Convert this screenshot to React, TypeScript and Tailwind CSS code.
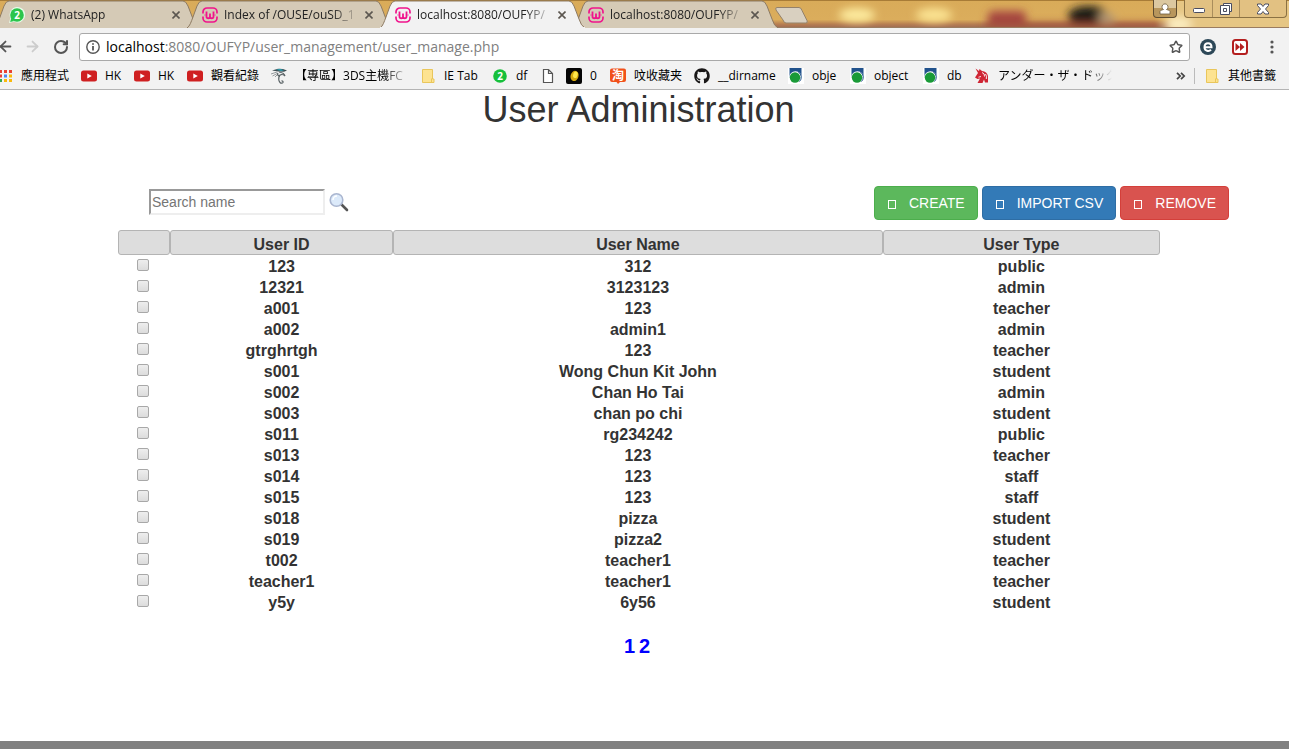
import { ReactNode } from "react";
import { ArrowLeft, ArrowRight, RotateCw, Star } from "lucide-react";
import { FaGithub } from "react-icons/fa";

const chromeFont = "font-['Open_Sans','Noto_Sans_CJK_TC',sans-serif]";

function WampIcon() {
  return (
    <svg viewBox="0 0 16 16" className="size-4 shrink-0" fill="none" stroke="#f0148c">
      <path d="M1 6.500V5a4 4 0 0 1 4-4h6a4 4 0 0 1 4 4v1.500M1 9.500V11a4 4 0 0 0 4 4h6a4 4 0 0 0 4-4V9.500" strokeWidth="1.700" />
      <path d="M4.500 4.500v5a1.750 1.750 0 0 0 3.500 0V6.500v3a1.750 1.750 0 0 0 3.500 0v-5" strokeWidth="1.800" />
      <path d="M2.500 8h1M12.500 8h1" strokeWidth="1" />
    </svg>
  );
}

function ChatBadge({ tail = true }: { tail?: boolean }) {
  return (
    <svg viewBox="0 0 16 16" className="size-4 shrink-0">
      {tail && <path d="M0 16l1.300-5A7.800 7.800 0 1 1 5 14.800z" fill="#e6fbe9" />}
      <circle cx="8" cy="8" r="6.800" fill={tail ? "#2bc54c" : "#16c03b"} />
      {tail && <path d="M1.200 15l1-4 3 3z" fill="#2bc54c" />}
      <text x="8" y="11.500" textAnchor="middle" fontSize="10" fontWeight="700" fill="#fff" fontFamily="Open Sans">2</text>
    </svg>
  );
}

function YouTubeIcon() {
  return (
    <svg viewBox="0 0 16 16" className="size-4 shrink-0">
      <rect y="2.500" width="16" height="11" rx="2.500" fill="#cf2021" />
      <path d="M6.300 5.500v5L10.800 8z" fill="#fff" />
    </svg>
  );
}

function DragonIcon() {
  return (
    <svg viewBox="0 0 16 16" className="size-4 shrink-0" fill="none">
      <path d="M1 2.500L7 .8l5 .2 4 1.500-3 1.200L7 3.500z" fill="#3f4f54" />
      <path d="M5 1.800L9 .8l4 1.500-3 .8z" fill="#2d9cad" />
      <path d="M0 6l6-2M1.500 8L7 5M4 9l3-3" stroke="#8b9193" strokeWidth="0.900" />
      <path d="M8 4c3 .5 5.500 1.500 6 4M7 5c-1 1.500 0 3 2 3.300M14 8c-2.500-2.500-5.500-1.500-6 .5-.6 2.500-.5 4.500 1 6 1 1 2.500.8 3 0 .3-1-.5-1.800-1.500-1.500" stroke="#5a6366" strokeWidth="1.200" />
    </svg>
  );
}

function FolderIcon() {
  return (
    <svg viewBox="0 0 16 16" className="size-4 shrink-0">
      <path d="M2.500 1.500h10v9.500h1.500v3.500H2.500z" fill="#fde391" stroke="#e9c65b" />
      <path d="M11.500 14v-3.500" stroke="#e9c65b" />
    </svg>
  );
}

function PageIcon() {
  return (
    <svg viewBox="0 0 16 16" className="size-4 shrink-0" fill="#fff" stroke="#555" strokeWidth="1.200">
      <path d="M3.500 1.500h5l4 4v9h-9zM8.500 1.500v4h4" />
    </svg>
  );
}

function CoinIcon() {
  return (
    <svg viewBox="0 0 16 16" className="size-4 shrink-0">
      <rect width="16" height="16" rx="2" fill="#050505" />
      <ellipse cx="8.500" cy="7.800" rx="4" ry="5.200" fill="#d5a90f" transform="rotate(15 8 8)" />
      <ellipse cx="9" cy="6.500" rx="2.200" ry="3.300" fill="#ffe84a" transform="rotate(15 8 8)" />
    </svg>
  );
}

function TaobaoIcon() {
  return (
    <svg viewBox="0 0 16 16" className="size-4 shrink-0">
      <path d="M2 .5h12q2 0 2 2V12q0 2-2 2h-4l-2 2-1.500-2H2q-2 0-2-2V2.500Q0 .5 2 .5" fill="#f1511b" />
      <text x="8" y="12" textAnchor="middle" fontSize="12" fontWeight="700" fill="#fff" fontFamily="Noto Sans CJK TC">淘</text>
    </svg>
  );
}

function SchoolIcon() {
  return (
    <svg viewBox="0 0 16 16" className="size-4 shrink-0">
      <path d="M0 0h16v16H0z" fill="#fff" />
      <path d="M1.500 0h12v10H1.500z" fill="#21528c" />
      <circle cx="7.500" cy="9.500" r="6.300" fill="#fff" />
      <path d="M10.500 4.200a6 6 0 0 1 1 9.300" stroke="#21528c" fill="none" />
      <circle cx="7" cy="9.500" r="5.200" fill="#1a9a38" />
    </svg>
  );
}

function UnicornIcon() {
  return (
    <svg viewBox="0 0 16 16" className="size-4 shrink-0">
      <path d="M1.500.5L5 3l.5-2L8 3q5 .5 6 5v6.500h-3l-1-3-1.500 3.500H3.500L6 10.500l-2.500.5L1 9.500 4 5z" fill="#cf2534" />
      <path d="M4.500 9.200L7 8.500M8 4.500q3 1 2.500 4M11.500 6q1.500 2 .8 5" stroke="#fff" strokeWidth="0.900" fill="none" />
    </svg>
  );
}

function CloseMark() {
  return (
    <svg viewBox="0 0 8 8" className="size-2" stroke="currentColor" strokeWidth="1.600">
      <path d="M.5.5l7 7M7.500.5l-7 7" />
    </svg>
  );
}

const tabs = [
  { title: "(2) WhatsApp", icon: <ChatBadge />, active: false },
  { title: "Index of /OUSE/ouSD_1", icon: <WampIcon />, active: false },
  { title: "localhost:8080/OUFYP/", icon: <WampIcon />, active: true },
  { title: "localhost:8080/OUFYP/", icon: <WampIcon />, active: false },
];

function TabStrip() {
  return (
    <div className="relative flex h-7 overflow-hidden bg-[#d8aa58]">
      <svg className="absolute inset-0 h-full w-full" viewBox="0 0 1289 28" preserveAspectRatio="none">
        <defs>
          <filter id="haze" x="-50%" y="-50%" width="200%" height="200%"><feGaussianBlur stdDeviation="4" /></filter>
          <linearGradient id="gold" x2="0" y2="1">
            <stop offset="0" stopColor="#d9ab59" />
            <stop offset="0.700" stopColor="#dbad5c" />
            <stop offset="0.860" stopColor="#b87f52" />
            <stop offset="1" stopColor="#9c6a55" />
          </linearGradient>
        </defs>
        <rect width="1289" height="28" fill="url(#gold)" />
        <g filter="url(#haze)">
          <rect x="1168" y="-10" width="140" height="50" fill="#e6c684" />
          <ellipse cx="857" cy="15" rx="18" ry="7" fill="#fdeb9e" />
          <ellipse cx="934" cy="15" rx="18" ry="7" fill="#fbe392" />
          <rect x="988" y="11" width="38" height="14" rx="5" fill="#a5453f" />
          <ellipse cx="1088" cy="16" rx="20" ry="10" fill="#1f1a12" />
          <ellipse cx="1106" cy="18" rx="9" ry="5" fill="#b59a75" />
          <rect x="985" y="23" width="175" height="5" fill="#9a4736" />
          <ellipse cx="1178" cy="24" rx="14" ry="7" fill="#fcedc0" />
        </g>
        <path d="M0 .5h1289" stroke="#a87c37" />
        <path d="M0 27.500h1289" stroke="#9a7c60" />
      </svg>
      <div className="relative -ml-[6px] flex">
        {tabs.map((tab, i) => (
          <div key={i} className={`relative -mr-3 h-7 w-[205px] ${tab.active ? "z-10" : ""}`}>
            <svg className="absolute inset-0 h-full w-full" viewBox="0 0 205 28">
              <path
                d="M0 28C3 26 4 22 6 17L10 6Q12 1 15 1H189Q192 1 194 6L199 19Q201 26 205 28"
                fill={tab.active ? "#f2f2f2" : "#d5cab6"}
                stroke="#8d7a62"
              />
              {tab.active && <path d="M0 28h205" stroke="#f2f2f2" strokeWidth="2" />}
            </svg>
            <div className={`relative flex h-7 items-center pt-0.5 pr-[15px] pl-[15px] text-[12px] text-[#222] ${chromeFont}`}>
              {tab.icon}
              <span className="ml-[6px] whitespace-nowrap [mask-image:linear-gradient(to_right,black_108px,transparent_136px)]">
                {tab.title}
              </span>
              <button aria-label={`Close ${tab.title}`} className="ml-auto flex size-4 shrink-0 items-center justify-center text-[#5c5750]">
                <CloseMark />
              </button>
            </div>
          </div>
        ))}
        <button aria-label="New tab" className="relative ml-2 h-7 w-9">
          <svg viewBox="0 0 36 28" className="h-7 w-9">
            <path d="M3 7.500h22q2 0 3 3l5 10q1 2.500-1 2.500H12q-2 0-3-3L2 10q-1-2.500 1-2.500" fill="#d9d0c0" stroke="#94816a" />
          </svg>
        </button>
      </div>
      <div className="relative ml-auto flex items-start text-white">
        <button aria-label="Profile" className="mr-[7px] flex h-[18px] w-6 items-center justify-center rounded-b border border-t-0 border-[#5e4c31] bg-linear-to-b from-[#dcc8a0] from-50% to-[#b8965c] to-50%">
          <svg viewBox="0 0 12 12" className="size-3" fill="#fff" stroke="#6c5a3d" strokeWidth="0.800">
            <path d="M1 11V8.500Q1 7 4.500 6.500a3 3 0 1 1 3 0Q11 7 11 8.500V11z" />
          </svg>
        </button>
        <div className="mr-[2px] flex h-[18px] divide-x divide-[#a98d5c] rounded-b border border-t-0 border-[#8b7143] bg-[#e2c182]">
          <button aria-label="Minimize" className="flex w-7 items-center justify-center">
            <svg viewBox="0 0 12 12" className="size-3"><rect x=".5" y="5.500" width="11" height="4" rx="1" fill="#fff" stroke="#494c60" /></svg>
          </button>
          <button aria-label="Restore" className="flex w-[27px] items-center justify-center">
            <svg viewBox="0 0 12 12" className="size-3" fill="#fff" stroke="#494c60"><path d="M3.500.5h8v8h-8z" /><path d="M.5 2.500h9v9h-9z" /><path d="M3.500 5.500h3v3h-3z" /></svg>
          </button>
          <button aria-label="Close window" className="flex w-[46px] items-center justify-center">
            <svg viewBox="0 0 12 12" className="size-3"><path d="M.5 1h3.500L6 3.500 8 1h3.500v1.500L8.500 6l3 3.500V11H8L6 8.500 4 11H.5V9.500L3.500 6l-3-3.500z" fill="#fff" stroke="#494c60" /></svg>
          </button>
        </div>
      </div>
    </div>
  );
}

function Toolbar() {
  return (
    <div className="flex h-[34px] items-center bg-[#f2f2f2] pt-[3px]">
      <button aria-label="Back" className="-ml-[3px] text-[#555]"><ArrowLeft className="size-[17px]" strokeWidth={2.5} /></button>
      <button aria-label="Forward" className="ml-[10px] text-[#ccc]"><ArrowRight className="size-[17px]" strokeWidth={2.5} /></button>
      <button aria-label="Reload" className="ml-3 text-[#555]"><RotateCw className="size-4" strokeWidth={3} /></button>
      <div className="ml-[10px] flex h-7 flex-1 items-center rounded-[3px] border border-[#a9a9a9] bg-white pl-[6px]">
        <svg viewBox="0 0 14 14" className="size-[14px]" fill="none" stroke="#555" strokeWidth="1.400">
          <circle cx="7" cy="7" r="6.200" /><path d="M7 6v4.500M7 3.300v1.500" strokeWidth="1.800" />
        </svg>
        <div className={`ml-[6px] flex-1 text-[14px] text-[#808080] ${chromeFont}`}>
          <span className="text-black">localhost</span>:8080/OUFYP/user_management/user_manage.php
        </div>
        <button aria-label="Bookmark this page" className="mr-[6px] text-[#555]"><Star className="size-[14px]" strokeWidth={2.5} /></button>
      </div>
      <button aria-label="IE Tab" className="ml-[10px]">
        <svg viewBox="0 0 16 16" className="size-4">
          <circle cx="8" cy="8" r="8" fill="#2d4858" />
          <path d="M4.500 8.300h7C11.500 3 4.500 3 4.500 8.300c0 4 4.500 4.500 6.500 2.500" fill="none" stroke="#fff" strokeWidth="2" />
        </svg>
      </button>
      <button aria-label="Fast forward" className="ml-4">
        <svg viewBox="0 0 16 16" className="size-4">
          <rect x="1" y="1" width="14" height="14" rx="2.500" fill="#fff" stroke="#b41f1f" strokeWidth="2" />
          <path d="M3.500 4l4.500 4-4.500 4zM8 4l4.500 4L8 12z" fill="#b41f1f" />
        </svg>
      </button>
      <button aria-label="Menu" className="mr-[9px] ml-4">
        <svg viewBox="0 0 16 16" className="size-4" fill="#555"><circle cx="8" cy="3" r="1.600" /><circle cx="8" cy="8" r="1.600" /><circle cx="8" cy="13" r="1.600" /></svg>
      </button>
    </div>
  );
}

const bookmarks: { icon: ReactNode; label: string; width: string; fade?: boolean }[] = [
  { icon: <YouTubeIcon />, label: "HK", width: "w-[17px]" },
  { icon: <YouTubeIcon />, label: "HK", width: "w-[17px]" },
  { icon: <YouTubeIcon />, label: "觀看紀錄", width: "w-[48px]" },
  { icon: <DragonIcon />, label: "【專區】3DS主機FC", width: "w-[113px]", fade: true },
  { icon: <FolderIcon />, label: "IE Tab", width: "w-[36px]" },
  { icon: <ChatBadge tail={false} />, label: "df", width: "w-[12px]" },
  { icon: <PageIcon />, label: "", width: "w-0" },
  { icon: <CoinIcon />, label: "0", width: "w-[8px]" },
  { icon: <TaobaoIcon />, label: "呅收藏夹", width: "w-[48px]" },
  { icon: <FaGithub className="size-4 shrink-0 text-[#191717]" />, label: "__dirname", width: "w-[58px]" },
  { icon: <SchoolIcon />, label: "obje", width: "w-[26px]" },
  { icon: <SchoolIcon />, label: "object", width: "w-[37px]" },
  { icon: <SchoolIcon />, label: "db", width: "w-[15px]" },
  { icon: <UnicornIcon />, label: "アンダー・ザ・ドック", width: "w-[120px]", fade: true },
];

function BookmarksBar() {
  return (
    <nav className={`flex h-7 items-center border-b border-[#b4b4b4] bg-[#f2f2f2] text-[12px] whitespace-nowrap text-black ${chromeFont}`}>
      <a href="#apps" className="flex items-center">
        <svg viewBox="0 0 12 12" className="mr-[9px] size-3">
          <path d="M0 0h2v3H0zM9 0h3v3H9zM0 4.500h2v3H0z" fill="#e94234" />
          <path d="M4 0h3v3H4z" fill="#e94234" />
          <path d="M4 4.500h3v3H4z" fill="#4a88f0" />
          <path d="M9 4.500h3v3H9zM4 9h3v3H4zM9 9h3v3H9z" fill="#f9b90b" />
          <path d="M0 9h2v3H0z" fill="#34a853" />
        </svg>
        應用程式
      </a>
      {bookmarks.map((b, i) => (
        <a key={i} href="#bookmark" aria-label={b.label || "Page"} className={`ml-3 flex items-center ${b.label ? "gap-2" : "mr-[-2px]"}`}>
          {b.icon}
          <span className={`${b.width} ${b.fade ? "[mask-image:linear-gradient(to_right,black_88px,transparent_114px)]" : ""}`}>{b.label}</span>
        </a>
      ))}
      <button aria-label="More bookmarks" className="ml-auto text-[#444]">
        <svg viewBox="0 0 10 8" className="h-2 w-[10px]" fill="none" stroke="currentColor" strokeWidth="1.700">
          <path d="M1 .8L4.200 4 1 7.200M5 .8L8.200 4 5 7.200" />
        </svg>
      </button>
      <span className="mr-[9px] ml-2 h-4 w-px bg-[#bbb]" />
      <a href="#other" className="mr-[13px] flex items-center gap-2"><FolderIcon />其他書籤</a>
    </nav>
  );
}

const users = [
  ["123", "312", "public"],
  ["12321", "3123123", "admin"],
  ["a001", "123", "teacher"],
  ["a002", "admin1", "admin"],
  ["gtrghrtgh", "123", "teacher"],
  ["s001", "Wong Chun Kit John", "student"],
  ["s002", "Chan Ho Tai", "admin"],
  ["s003", "chan po chi", "student"],
  ["s011", "rg234242", "public"],
  ["s013", "123", "teacher"],
  ["s014", "123", "staff"],
  ["s015", "123", "staff"],
  ["s018", "pizza", "student"],
  ["s019", "pizza2", "student"],
  ["t002", "teacher1", "teacher"],
  ["teacher1", "teacher1", "teacher"],
  ["y5y", "6y56", "student"],
];

const actions = [
  { label: "CREATE", style: "bg-[#5cb85c] border-[#4cae4c]" },
  { label: "IMPORT CSV", style: "bg-[#337ab7] border-[#2e6da4]" },
  { label: "REMOVE", style: "bg-[#d9534f] border-[#d43f3a]" },
];

const headCell = "h-[25px] rounded-[3px] border border-[#b4b4b4] bg-[#ddd] p-0 pt-1";
const bodyCell = "p-0 pt-0.5";

export default function App() {
  return (
    <div className="flex min-h-screen flex-col bg-white">
      <header>
        <TabStrip />
        <Toolbar />
        <BookmarksBar />
      </header>
      <main className="flex-1 pr-3 font-['Liberation_Sans',Arial,sans-serif] text-[#333]">
        <h1 className="text-center text-[36px] leading-10">User Administration</h1>
        <div className="mt-14 flex h-[34px] items-center justify-between pr-12 pl-[149px]">
          <form className="flex items-center gap-1 pb-0.5" onSubmit={(e) => e.preventDefault()}>
            <input
              aria-label="Search name"
              placeholder="Search name"
              className="h-[26px] w-44 border-2 border-t-[#999] border-r-[#eee] border-b-[#eee] border-l-[#999] px-px text-[14px] placeholder:text-[#757575]"
            />
            <button aria-label="Search">
              <svg viewBox="0 0 20 20" className="size-5">
                <path d="M12 12l6 6" stroke="#555" strokeWidth="2.600" strokeLinecap="round" />
                <circle cx="7.500" cy="8" r="6.300" fill="#dceafa" stroke="#aab6d0" strokeWidth="1.600" />
                <path d="M4 8a4 4 0 0 1 4-4" stroke="#fff" strokeWidth="1.500" fill="none" />
              </svg>
            </button>
          </form>
          <div className="flex gap-1">
            {actions.map((a) => (
              <button key={a.label} className={`flex h-[34px] items-center gap-[13px] rounded-[4px] border px-3 text-[14px] text-white ${a.style}`}>
                <span className="mt-[3px] ml-px h-[9px] w-2 border border-white" />
                {a.label}
              </button>
            ))}
          </div>
        </div>
        <div className="mt-[10px] pr-[117px] pl-[118px]">
          <table className="w-full table-fixed border-separate border-spacing-0 text-center text-[16px] leading-[19px] font-bold">
            <colgroup>
              <col className="w-[5%]" />
              <col className="w-[21.4%]" />
              <col className="w-[47%]" />
              <col />
            </colgroup>
            <thead>
              <tr>
                <th aria-label="Select" className={headCell} />
                <th className={headCell}>User ID</th>
                <th className={headCell}>User Name</th>
                <th className={headCell}>User Type</th>
              </tr>
            </thead>
            <tbody>
              {users.map(([id, name, type]) => (
                <tr key={id} className="h-[21px]">
                  <td className="p-0 pt-1 pr-0.5 align-top">
                    <input
                      type="checkbox"
                      aria-label={`Select ${id}`}
                      className="mx-auto block size-3 appearance-none rounded-[2px] border border-[#a8a8a8] bg-linear-to-b from-[#eee] to-[#dcdcdc]"
                    />
                  </td>
                  <td className={bodyCell}>{id}</td>
                  <td className={bodyCell}>{name}</td>
                  <td className={bodyCell}>{type}</td>
                </tr>
              ))}
            </tbody>
          </table>
        </div>
        <nav className="mt-5 flex justify-center gap-1 pr-[3px] text-[20px] leading-7 font-bold text-[#00f]">
          <a href="#1">1</a>
          <a href="#2">2</a>
        </nav>
      </main>
      <footer className="h-2 bg-[#808080]" />
    </div>
  );
}
